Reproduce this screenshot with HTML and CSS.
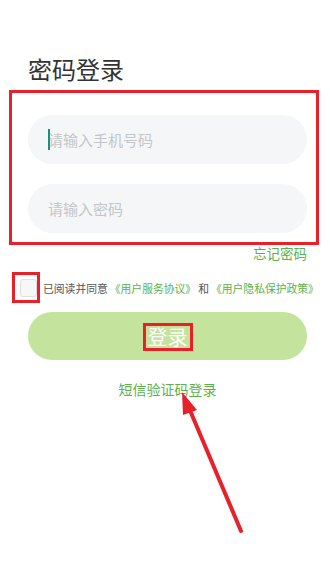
FILE: index.html
```html
<!DOCTYPE html>
<html lang="zh">
<head>
<meta charset="utf-8">
<link rel="stylesheet" href="styles.css">
</head>
<body>
<div class="page">
  <h1 class="title">密码登录</h1>
  <div class="fields">
    <div class="field"><span class="cursor"></span><span class="ph">请输入手机号码</span></div>
    <div class="field"><span class="ph">请输入密码</span></div>
  </div>
  <div class="forgot-row"><span class="forgot">忘记密码</span></div>
  <div class="agree">
    <span class="check"></span>
    <span class="agree-text">已阅读并同意<span class="link">《用户服务协议》</span>和<span class="link">《用户隐私保护政策》</span></span>
  </div>
  <div class="btn">登录</div>
  <div class="sms">短信验证码登录</div>

  <div class="mark mark-fields"></div>
  <div class="mark mark-check"></div>
  <div class="mark mark-btn"></div>
  <svg class="arrow" width="330" height="564" viewBox="0 0 330 564">
    <line x1="241" y1="531" x2="189" y2="408" stroke="#e8202a" stroke-width="4" stroke-linecap="round"/>
    <polygon points="182,392 197,410 183,415" fill="#e8202a"/>
  </svg>
</div>
</body>
</html>
```
FILE: styles.css
```css
html, body {
  margin: 0;
  padding: 0;
  background: #ffffff;
}
body {
  font-family: "Noto Sans CJK SC", "Noto Sans", sans-serif;
}
.page {
  position: relative;
  width: 330px;
  height: 564px;
  padding: 53px 23px 0 28px;
  box-sizing: border-box;
  overflow: hidden;
}
.title {
  margin: 0;
  font-size: 24px;
  line-height: 32px;
  font-weight: 400;
  color: #333333;
}
.fields {
  margin-top: 30px;
  display: flex;
  flex-direction: column;
  gap: 20px;
}
.field {
  height: 49px;
  border-radius: 25px;
  background: #f5f6f7;
  display: flex;
  align-items: center;
  padding-left: 20px;
  position: relative;
}
.cursor {
  position: absolute;
  left: 20px;
  top: 14px;
  width: 2px;
  height: 21px;
  background: #17907c;
}
.ph {
  font-size: 15px;
  color: #c4c6c9;
}
.forgot-row {
  display: flex;
  justify-content: flex-end;
  margin-top: 8px;
  height: 24px;
  line-height: 24px;
}
.forgot {
  font-size: 13.5px;
  color: #5cb14a;
}
.agree {
  margin-top: 12px;
  margin-left: -8px;
  display: flex;
  align-items: center;
  height: 22px;
}
.check {
  width: 15px;
  height: 16px;
  border: 1px solid #dcdfe3;
  border-radius: 3px;
  background: #f6f7f8;
  flex: none;
}
.agree-text {
  margin-left: 6px;
  font-size: 10.8px;
  color: #555555;
  white-space: nowrap;
}
.link {
  color: #5cb14a;
  margin: 0 2px;
}
.btn {
  margin-top: 13px;
  height: 48px;
  border-radius: 24px;
  background: #c4e49d;
  color: #ffffff;
  font-size: 20px;
  display: flex;
  align-items: center;
  justify-content: center;
}
.sms {
  margin-top: 18px;
  text-align: center;
  font-size: 14px;
  line-height: 22px;
  color: #5cb14a;
}
.mark {
  position: absolute;
  border: 3px solid #e8202a;
  box-sizing: border-box;
}
.mark-fields {
  left: 9px;
  top: 90px;
  width: 310px;
  height: 155px;
}
.mark-check {
  left: 12px;
  top: 272px;
  width: 28px;
  height: 31px;
}
.mark-btn {
  left: 143px;
  top: 323px;
  width: 50px;
  height: 28px;
}
.arrow {
  position: absolute;
  left: 0;
  top: 0;
}
```
